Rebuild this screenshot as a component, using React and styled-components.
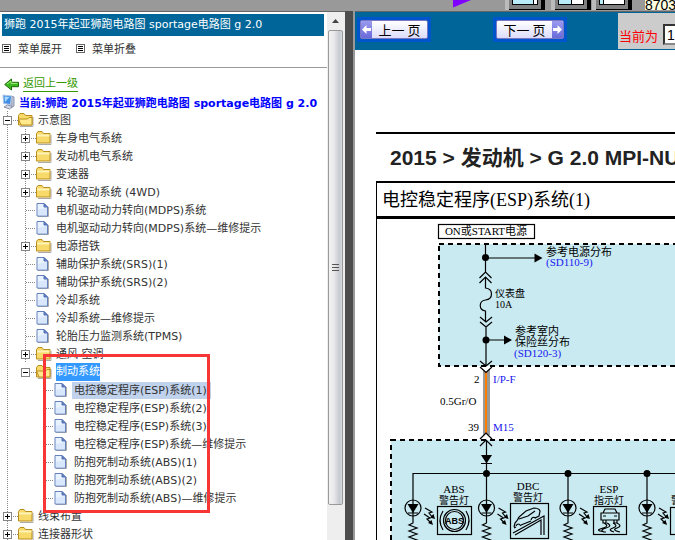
import React from "react";
import styled, { createGlobalStyle, css } from "styled-components";

const GlobalStyle = createGlobalStyle`
  * {
    box-sizing: border-box;
  }

  body {
    margin: 0;
    overflow: hidden;
    background: #fff;
    color: #333;
    font-family: "DejaVu Sans", "Noto Sans CJK SC", sans-serif;
    font-size: 11px;
  }
`;

const Page = styled.div`
  display: flex;
  flex-direction: column;
  height: 100vh;
  overflow: hidden;
`;

const TopStrip = styled.header`
  display: flex;
  flex: none;
  height: 11px;
  padding-left: 450px;
  overflow: hidden;
  background: #999;
`;

const PartNumber = styled.span`
  flex: none;
  height: 10px;
  margin-left: 5px;
  background: #fffce0;
  color: #000;
  font: 14px/10px "Liberation Sans", sans-serif;
`;

const Frames = styled.div`
  display: flex;
  flex: 1;
  min-height: 0;
`;

const Sidebar = styled.aside`
  display: flex;
  flex: 0 0 345px;
  border-top: 1px solid #666;
`;

const SidebarBody = styled.div`
  flex: 1;
  min-width: 0;
  overflow: hidden;
  white-space: nowrap;
`;

const CarTitle = styled.div`
  height: 22px;
  margin: 2px 3px 0 2px;
  padding-left: 2px;
  background: #069;
  color: #fff;
  line-height: 22px;
`;

const MenuBar = styled.div`
  display: flex;
  gap: 14px;
  height: 32px;
  padding-left: 2px;
  border-bottom: 1px solid #999;
`;

const MenuButton = styled.button`
  display: flex;
  align-items: center;
  gap: 7px;
  height: 24px;
  padding: 0;
  border: 0;
  background: none;
  color: #333;
  font: inherit;
`;

const BackRow = styled.div`
  display: flex;
  align-items: center;
  gap: 4px;
  height: 18px;
  margin-top: 7px;
  padding-left: 4px;
`;

const BackLink = styled.a`
  border-bottom: 1px solid #390;
  color: #390;
  line-height: 15px;
  text-decoration: none;
`;

const CurrentRow = styled.div`
  display: flex;
  align-items: center;
  gap: 4px;
  height: 18px;
  padding-left: 2px;
  color: #00f;
  font-weight: bold;
`;

const Tree = styled.ul`
  position: relative;
  margin: 0;
  padding: 0;
  list-style: none;
`;

const TreeRow = styled.li`
  display: flex;
  align-items: center;
  height: 18px;
`;

const vertical = css`
  background-image: repeating-linear-gradient(#888 0 1px, transparent 1px 2px);
  background-position: 7px 0;
  background-size: 1px 100%;
  background-repeat: no-repeat;
`;

const Guide = styled.span`
  display: flex;
  align-items: center;
  flex: 0 0 18px;
  height: 18px;
  padding-left: 3px;
  ${(props) => props.$line && vertical}
`;

const Dots = styled.span`
  flex: 1;
  height: 1px;
  margin-left: ${(props) => (props.$leaf ? "5px" : "1px")};
  background: repeating-linear-gradient(90deg, #888 0 1px, transparent 1px 2px);
`;

const Toggle = styled.button`
  display: block;
  width: 9px;
  height: 9px;
  padding: 0;
  border: 1px solid #848484;
  background: linear-gradient(#000, #000) 1px 3px / 5px 1px no-repeat,
    ${(props) =>
      props.$open
        ? ""
        : "linear-gradient(#000, #000) 3px 1px / 1px 5px no-repeat,"}
    #fff;
`;

const IconCell = styled.span`
  flex: 0 0 18px;
  height: 18px;
`;

const NodeLink = styled.a`
  padding: 0 4px 0 2px;
  background: ${(props) => (props.$active ? "#c0d2ec" : "none")};
  color: #333;
  line-height: 17px;
  text-decoration: none;
`;

const Selected = styled.span`
  display: inline-block;
  background: #39f;
  color: #fff;
  line-height: 18px;
`;

const Marker = styled.div`
  position: absolute;
  top: 243px;
  left: 43px;
  width: 167px;
  height: 159px;
  border: 3px solid #f93636;
`;

const Scrollbar = styled.div`
  display: flex;
  flex-direction: column;
  flex: 0 0 18px;
  padding: 0 2px 0 1px;
  background: #eee;
`;

const ScrollUp = styled.div`
  display: flex;
  align-items: center;
  justify-content: center;
  height: 18px;
`;

const Thumb = styled.div`
  display: flex;
  align-items: center;
  justify-content: center;
  height: 90%;
  border: 1px solid #999;
  border-radius: 2px;
  background: linear-gradient(90deg, #f3f3f3, #e8e8ea 40%, #c6c9d0 80%, #d8dade);
`;

const Divider = styled.div`
  flex: 0 0 10px;
  border-right: 2px solid #999;
  background: #4d4d4d;
`;

const Content = styled.main`
  flex: 1;
  min-width: 0;
  overflow: hidden;
  border-top: 1px solid #666;
`;

const Pager = styled.nav`
  display: flex;
  align-items: flex-start;
  height: 38px;
  padding: 1px 0 1px 2px;
  background: #069;
`;

const PageButton = styled.button`
  display: flex;
  flex: 0 0 74px;
  height: 25px;
  margin: 4px 62px 0 0;
  padding: 0;
  overflow: hidden;
  border: 3px solid #05c;
  background: #05c;
  color: #000;
  font: 13px/19px "Noto Sans CJK SC", sans-serif;

  & + & {
    margin-right: 51px;
  }
`;

const PageFace = styled.span`
  display: flex;
  flex: 1;
  flex-direction: ${(props) => (props.$next ? "row-reverse" : "row")};
  height: 19px;
  border: 1px solid #7a78c0;
  border-radius: 2px;
  background: linear-gradient(#fff, #dcdcfb);
  line-height: 17px;
  overflow: hidden;
`;

const PageArrow = styled.span`
  flex: 0 0 11px;
  background: linear-gradient(#9a9af0, #6a6ada);
`;

const PageText = styled.span`
  flex: 1;
  text-align: center;
  white-space: pre;
`;

const PageCell = styled.label`
  display: flex;
  align-items: flex-start;
  flex: 1 0 auto;
  gap: 5px;
  height: 36px;
  padding: 11px 4px 0 1px;
  background: #ccc;
  color: #f00;
  font: 13px/26px "Liberation Sans", "Noto Sans CJK SC", sans-serif;
`;

const PageInput = styled.input`
  width: 60px;
  height: 21px;
  padding: 0 2px;
  border: 2px inset #888;
  background: #fff;
  font: 14px "Liberation Sans", sans-serif;
`;

const Sheet = styled.article`
  margin: 82px 0 0 21px;
  border-top: 2px solid #000;
`;

const SheetTitle = styled.h1`
  margin: 0;
  padding: 9px 0 8px 14px;
  color: #222;
  font: bold 21px/30px "Liberation Sans", "Noto Sans CJK SC", sans-serif;
  white-space: nowrap;
`;

const Drawing = styled.section`
  border-top: 2px solid #000;
  border-left: 1px solid #000;
`;

const DrawingTitle = styled.h2`
  height: 36px;
  margin: 0;
  padding-left: 5px;
  border-bottom: 3px solid #000;
  color: #000;
  font: 18px/35px "Liberation Serif", "Noto Sans CJK SC", serif;
  white-space: nowrap;
`;

const Diagram = styled.svg`
  display: block;
  width: 100%;
  height: 330px;
  font: 10px "Liberation Serif", "Noto Sans CJK SC", serif;

  .wire {
    fill: none;
    stroke: #000;
    stroke-width: 1.2;
  }

  .dashed {
    fill: #c9eaf1;
    stroke: #000;
    stroke-width: 2;
    stroke-dasharray: 5 4;
  }

  .ref {
    fill: #1818f0;
    font-size: 11px;
  }

  .mid {
    text-anchor: middle;
  }

  .wide {
    font-size: 11px;
  }
`;

const Art = styled.svg`
  display: block;
  flex: none;
`;

// level, type, label; folders are "closed" or "open"
const nodes = [
  [0, "open", "示意图"],
  [1, "closed", "车身电气系统"],
  [1, "closed", "发动机电气系统"],
  [1, "closed", "变速器"],
  [1, "closed", "4 轮驱动系统 (4WD)"],
  [1, "page", "电机驱动动力转向(MDPS)系统"],
  [1, "page", "电机驱动动力转向(MDPS)系统—维修提示"],
  [1, "closed", "电源搭铁"],
  [1, "page", "辅助保护系统(SRS)(1)"],
  [1, "page", "辅助保护系统(SRS)(2)"],
  [1, "page", "冷却系统"],
  [1, "page", "冷却系统—维修提示"],
  [1, "page", "轮胎压力监测系统(TPMS)"],
  [1, "closed", "通风 空调"],
  [1, "open", "制动系统", "selected"],
  [2, "page", "电控稳定程序(ESP)系统(1)", "active"],
  [2, "page", "电控稳定程序(ESP)系统(2)"],
  [2, "page", "电控稳定程序(ESP)系统(3)"],
  [2, "page", "电控稳定程序(ESP)系统—维修提示"],
  [2, "page", "防抱死制动系统(ABS)(1)"],
  [2, "page", "防抱死制动系统(ABS)(2)"],
  [2, "page", "防抱死制动系统(ABS)—维修提示"],
  [0, "closed", "线束布置"],
  [0, "closed", "连接器形状"],
];

function ListIcon() {
  return (
    <Art width="9" height="9">
      <rect x=".5" y=".5" width="8" height="8" fill="#fff" stroke="#666" />
      <path d="M2 2.5h5M2 4.5h5M2 6.5h5" stroke="#000" />
    </Art>
  );
}

function BackIcon() {
  return (
    <Art width="15" height="13">
      <path
        d="M.7 6.5L7.5 1v3.3h7v4.4h-7V12z"
        fill="#3cb820"
        stroke="#1c6a08"
      />
      <path d="M3 6l4-3v2.4h6.5" fill="none" stroke="#a5ea7e" />
    </Art>
  );
}

function ComputerIcon() {
  return (
    <Art width="13" height="16">
      <path d="M9 2l3 1v9l-3 2z" fill="#b8bfd0" stroke="#8d96b0" />
      <path d="M1 1l8.500 1-1 8.500L1.500 9.500z" fill="#3f8fe8" stroke="#b4c6e4" />
      <path d="M2.500 2.500l5 .5-4.500 5z" fill="#a8d8ff" />
      <path d="M2 13l3.500-2 5 1.500-3 2.500z" fill="#d5d9e6" stroke="#8890a8" />
    </Art>
  );
}

function NodeIcon({ type }) {
  if (type === "page") {
    return (
      <Art width="18" height="18">
        <path d="M2 15.500h10.500V6" fill="none" stroke="#aaa" />
        <path d="M1 2.500h7l3.500 3.500v9H1z" fill="#e9f2ff" stroke="#6480bd" />
        <path d="M2 9l9-2v7.500H2z" fill="#cfe0fa" opacity=".6" />
        <path d="M8 2.500V6h3.500z" fill="#5f7fc4" stroke="#5472b5" />
      </Art>
    );
  }
  return (
    <Art width="18" height="18">
      <path d="M2 15.500h13V6" fill="none" stroke="#aaa" />
      <path
        d="M.5 14V4.500l1.500-2h4l1.500 2h6.500V14z"
        fill="#f8da6a"
        stroke="#b98e1c"
      />
      {type === "open" ? (
        <path d="M3 14L.5 8h9l1.500-1.500h3V14z" fill="#ffe98c" stroke="#b98e1c" />
      ) : (
        <path d="M1 6.500h12.500" stroke="#fff3b5" strokeWidth="2" />
      )}
    </Art>
  );
}

function TreeNode({ node: [level, type, label, state] }) {
  const folder = type !== "page";
  const last = state === "selected";
  return (
    <TreeRow>
      {level > 0 && <Guide $line />}
      {level > 1 && <Guide />}
      <Guide $line={!last}>
        {folder && (
          <Toggle $open={type === "open"} aria-label={`切换 ${label}`} />
        )}
        <Dots $leaf={!folder} />
      </Guide>
      <IconCell>
        <NodeIcon type={type} />
      </IconCell>
      <NodeLink href="#" $active={state === "active"}>
        {last ? <Selected>{label}</Selected> : label}
      </NodeLink>
    </TreeRow>
  );
}

function TopArt() {
  return (
    <Art width="190" height="11">
      <path d="M3 0h18L3 7.500z" fill="#8000ff" />
      {[55, 101, 142].map((x, i) => (
        <g key={x} transform={`translate(${x})`}>
          <rect width="4" height="10" fill="#bbb" />
          <rect x="4" width="36" height="10" fill="#000" />
          <rect x="4" width="32" height="9" fill="#808080" />
          <rect x="7" width="26" height="5" fill="#000" />
          <rect x="8" width="24" height="4" fill="#fff" />
          <rect x="8" width={[20, 12, 3][i]} height="4" fill="#b8ecf8" />
          <path d={`M${[28.5, 20.5, 11.5][i]} 0v4`} stroke="#000" />
        </g>
      ))}
    </Art>
  );
}

function PagerButton({ next, children }) {
  return (
    <PageButton>
      <PageFace $next={next}>
        <PageArrow>
          <Art width="11" height="17">
            <path
              d={
                next
                  ? "M10 8.500L5.500 4v3H1v3h4.500v3z"
                  : "M1 8.500L5.500 4v3H10v3H5.500v3z"
              }
              fill="#fff"
            />
          </Art>
        </PageArrow>
        <PageText>{children}</PageText>
      </PageFace>
    </PageButton>
  );
}

function Lamp({ x }) {
  return (
    <g transform={`translate(${x} 0)`}>
      <path
        className="wire"
        d="M0 473v50l-4 2 8 3-8 3 8 3-8 3 8 3-8 3"
      />
      <circle className="wire" cy="508" r="8" />
      <path d="M-5.500 504h11L0 513z" />
      <path
        className="wire"
        d="M-5 513h10M12 508l7 4-3 1 4 5M11 514l6 4-3 1 4 4"
      />
      <path d="M22 519l-5-1.500 3.500-3.500zM20 525l-5-2 3.500-3z" />
    </g>
  );
}

function Circuit() {
  return (
    <Diagram role="img" aria-label="ESP 电路图">
      <g transform="translate(-377 -219)">
        <rect className="wire" x="438.5" y="224.5" width="96" height="14" />
        <text className="mid wide" x="486" y="235">
          ON或START电源
        </text>

        <rect className="dashed" x="439" y="244" width="1200" height="122" />
        <rect className="dashed" x="391" y="440" width="1200" height="200" />

        <path
          className="wire"
          d="M485.500 243v29M479.500 278l6-6 6 6M479.500 283l6-6 6 6M485.500 277v11c8 1 8 11 0 12c-7 1-7 10 0 11v11M480 317l6 5 6-5M480 322l6 5 6-5M486 327v39M480 361l6 5 6-5M485 258h52M486 340h20"
        />
        <circle cx="485.500" cy="257.500" r="3.500" />
        <circle cx="486" cy="340" r="3.500" />
        <path d="M534.500 253.500l8 4.500-8 4.500zM504 335.500l8 4.500-8 4.500z" />

        <text className="wide" x="546" y="256">
          参考电源分布
        </text>
        <text className="ref" x="546" y="266">
          (SD110-9)
        </text>
        <text x="495" y="297">
          仪表盘
        </text>
        <text x="495" y="308">
          10A
        </text>
        <text className="wide" x="515" y="335">
          参考室内
        </text>
        <text className="wide" x="515" y="346">
          保险丝分布
        </text>
        <text className="ref" x="514" y="357">
          (SD120-3)
        </text>

        <rect x="483" y="369" width="7" height="66" fill="#999" />
        <rect x="485" y="369" width="2" height="66" fill="#ff8000" />
        <path d="M480 367h12l-6 5zM480 439h12l-6-6z" fill="#fff" />
        <path
          className="wire"
          d="M480 367l6 5.500 6-5.500M480 439l6-6 6 6M480 446l6-6 6 6M486.500 440v33M481 463.500h11M413 473.500h1200"
        />
        <path d="M481 455h11l-5.500 8.500z" />
        <text className="wide" x="474" y="383">
          2
        </text>
        <text className="ref" x="493" y="383">
          I/P-F
        </text>
        <text className="wide" x="440" y="405">
          0.5Gr/O
        </text>
        <text className="wide" x="468" y="431">
          39
        </text>
        <text className="ref" x="493" y="431">
          M15
        </text>

        {[486.5, 568, 647].map((x) => (
          <circle key={x} cx={x} cy="473.500" r="3.500" />
        ))}
        {[413, 486.5, 568, 647].map((x) => (
          <Lamp key={x} x={x} />
        ))}

        <text className="mid wide" x="454" y="493">
          ABS
        </text>
        <text className="mid" x="454" y="504">
          警告灯
        </text>
        <text className="mid wide" x="528" y="490">
          DBC
        </text>
        <text className="mid" x="528" y="501">
          警告灯
        </text>
        <text className="mid wide" x="609" y="493">
          ESP
        </text>
        <text className="mid" x="609" y="504">
          指示灯
        </text>
        <text x="671" y="504">
          警告灯
        </text>

        <g className="wire">
          <rect x="437.500" y="506.500" width="34" height="28" />
          <circle cx="454.500" cy="520.500" r="9" />
          <circle cx="454.500" cy="520.500" r="11" />
          <path d="M443 511q-6 9.500 0 19M466 511q6 9.500 0 19" />
          <rect x="510.500" y="503.500" width="38" height="35" />
          <path d="M514 527l1-4q3-3 4-6l7-6 8-3q5 0 6 3l-1 5-4 2M514 528l2-1M521 525l10-4" />
          <path d="M516 526q2-4 5 0M531 520q1-4 5-2M519 519l9-3 7-5" />
          <path d="M513 533l31-17v19M515 535l26-15v15" />
          <rect x="593.500" y="506.500" width="33" height="28" />
          <path d="M603 513l2-4h10l2 4zM601 513h18v7h-18zM603 520v3h3v-3M614 520v3h3v-3M603 516h3M614 516h3M604 523q6 3-1 5t-3 3 6 1M607 523q6 3-1 5t-2 4M613 523q6 3 0 5t1 4M617 523q6 3 0 5t3 4" />
          <rect x="670.500" y="507.500" width="34" height="27" />
        </g>
        <text
          className="mid"
          x="454.500"
          y="524"
          fontFamily="Liberation Sans"
          fontWeight="bold"
          fontSize="9"
        >
          ABS
        </text>
      </g>
    </Diagram>
  );
}

export default function App() {
  return (
    <Page>
      <GlobalStyle />
      <TopStrip>
        <TopArt />
        <PartNumber>87038</PartNumber>
      </TopStrip>
      <Frames>
        <Sidebar>
          <SidebarBody>
            <CarTitle>狮跑 2015年起亚狮跑电路图 sportage电路图 g 2.0</CarTitle>
            <MenuBar>
              <MenuButton>
                <ListIcon />
                菜单展开
              </MenuButton>
              <MenuButton>
                <ListIcon />
                菜单折叠
              </MenuButton>
            </MenuBar>
            <BackRow>
              <BackIcon />
              <BackLink href="#">返回上一级</BackLink>
            </BackRow>
            <CurrentRow>
              <ComputerIcon />
              当前:狮跑 2015年起亚狮跑电路图 sportage电路图 g 2.0
            </CurrentRow>
            <Tree>
              {nodes.map((node) => (
                <TreeNode key={node[2]} node={node} />
              ))}
              <Marker as="li" aria-hidden="true" />
            </Tree>
          </SidebarBody>
          <Scrollbar>
            <ScrollUp>
              <Art width="7" height="4">
                <path d="M0 4l3.500-4L7 4z" fill="#444" />
              </Art>
            </ScrollUp>
            <Thumb>
              <Art width="7" height="8">
                <path d="M0 .5h7M0 3.500h7M0 6.500h7" stroke="#555" />
              </Art>
            </Thumb>
          </Scrollbar>
        </Sidebar>
        <Divider />
        <Content>
          <Pager>
            <PagerButton>上一 页</PagerButton>
            <PagerButton next>下一 页</PagerButton>
            <PageCell>
              当前为
              <PageInput defaultValue="17" />
            </PageCell>
          </Pager>
          <Sheet>
            <SheetTitle>2015 &gt; 发动机 &gt; G 2.0 MPI-NU</SheetTitle>
            <Drawing>
              <DrawingTitle>电控稳定程序(ESP)系统(1)</DrawingTitle>
              <Circuit />
            </Drawing>
          </Sheet>
        </Content>
      </Frames>
    </Page>
  );
}
